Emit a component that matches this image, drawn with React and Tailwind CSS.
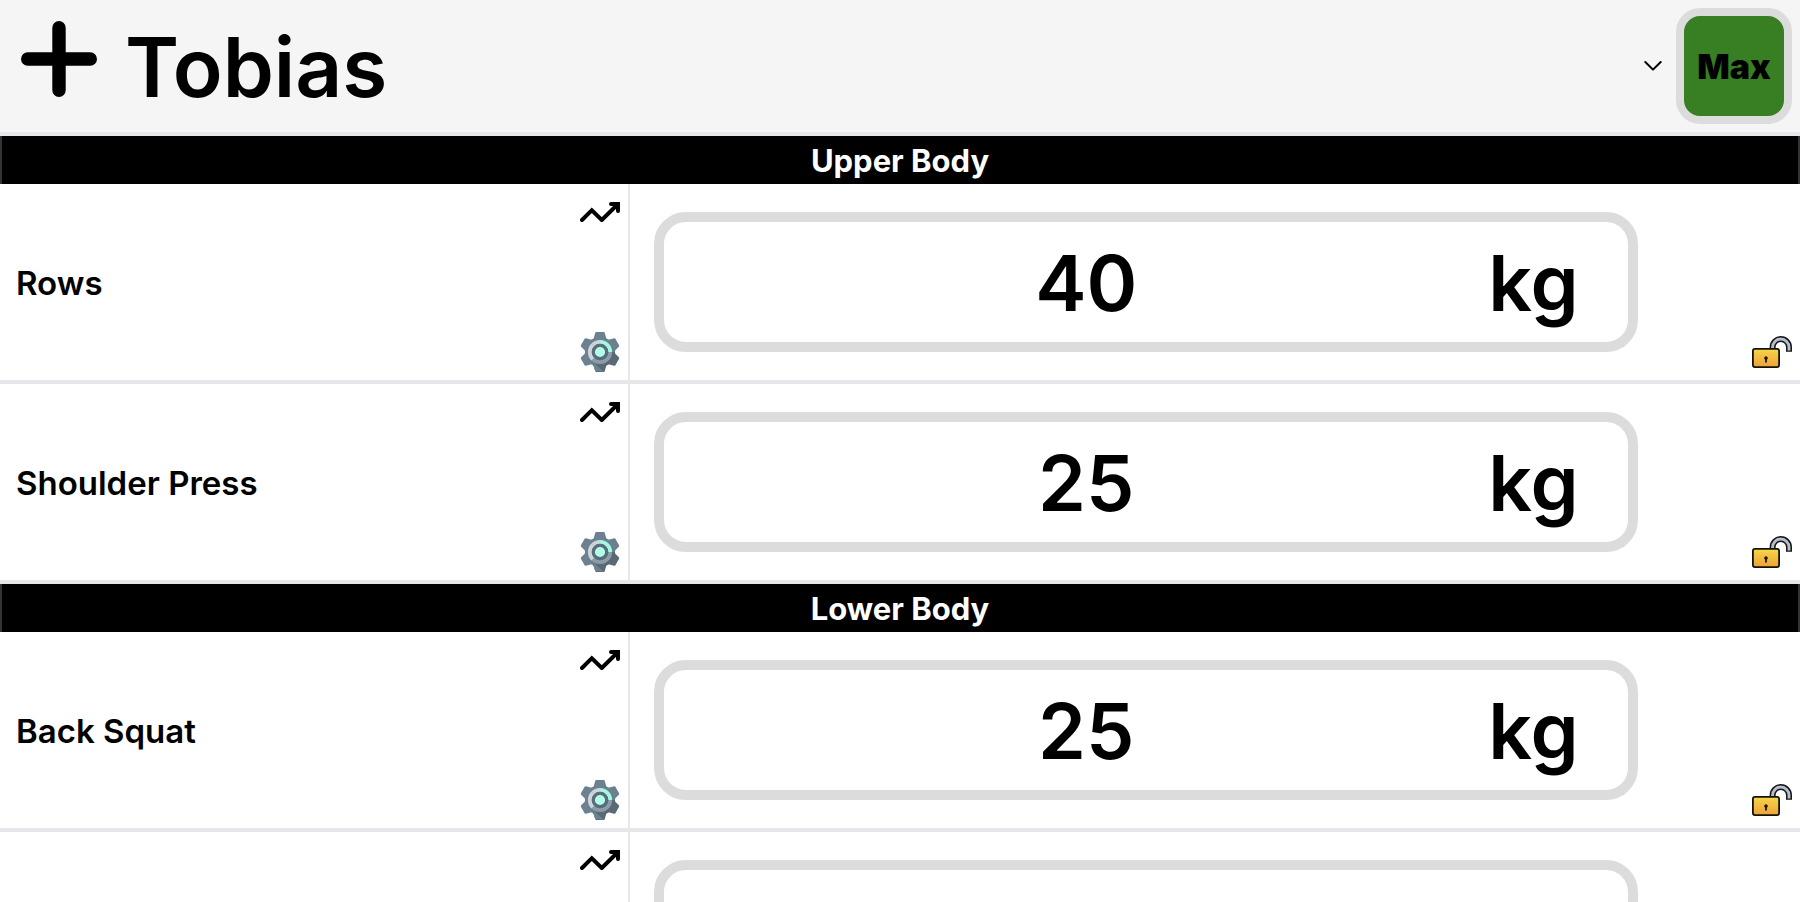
import React, { useState } from "react";

const SECTIONS = [
  {
    title: "Upper Body",
    exercises: [
      { name: "Rows", weight: "40" },
      { name: "Shoulder Press", weight: "25" },
    ],
  },
  {
    title: "Lower Body",
    exercises: [
      { name: "Back Squat", weight: "25" },
      { name: "Deadlift", weight: "40" },
    ],
  },
];

function PlusIcon() {
  return (
    <svg className="size-[76px]" viewBox="0 0 76 76" fill="none" stroke="currentColor" strokeWidth="13.4" strokeLinecap="round" aria-hidden="true">
      <path d="M38 6.7v62.6M6.7 38h62.6" />
    </svg>
  );
}

function ChevronIcon() {
  return (
    <svg className="pointer-events-none h-3 w-[18px] shrink-0" viewBox="0 0 18 12" fill="none" stroke="currentColor" strokeWidth="2" strokeLinecap="round" strokeLinejoin="round" aria-hidden="true">
      <path d="M1.3 2 9 9.6 16.7 2" />
    </svg>
  );
}

function TrendIcon() {
  return (
    <svg className="h-5 w-10" viewBox="0 0 40 20" fill="none" stroke="currentColor" strokeWidth="4" strokeLinecap="round" aria-hidden="true">
      <path d="M2 18 11.8 8.2 21.8 18 37 3" />
      <path d="M31 2h7v7" />
      <path d="M31 0h9v9z" fill="currentColor" stroke="none" />
    </svg>
  );
}

const TOOTH = "M15.2 1q.2-.9 1.1-.9h7.4q.9 0 1.1.9l1.8 6.5H13.4z";

function GearTooth({ angle, fill }) {
  return <path d={TOOTH} fill={fill} transform={`rotate(${angle} 20 20)`} />;
}

function GearIcon() {
  return (
    <svg className="size-10" viewBox="0 0 40 40" aria-hidden="true">
      <circle cx="20" cy="20" r="15" fill="#6c818f" />
      <GearTooth angle={0} fill="#6c818f" />
      <GearTooth angle={60} fill="#6c818f" />
      <GearTooth angle={-60} fill="#6c818f" />
      <GearTooth angle={-120} fill="#6c818f" />
      <GearTooth angle={120} fill="#596a74" />
      <GearTooth angle={180} fill="#596a74" />
      <path d="M35 20A15 15 0 0 1 12.5 33L20 20z" fill="#596a74" />
      <path d="M12 29 13.2 33.5 15.4 39 23.5 39.6z" fill="#6c818f" />
      <circle cx="20" cy="20" r="10.2" fill="none" stroke="#8d9ba7" strokeWidth="3.8" />
      <path d="M12.8 12.8A10.2 10.2 0 0 0 12.8 27.2" fill="none" stroke="#ced4da" strokeWidth="3.8" />
      <path d="M20 9.8A10.2 10.2 0 0 0 12.8 12.8" fill="none" stroke="#ced4da" strokeWidth="3.8" />
      <path d="M20 9.8A10.2 10.2 0 0 1 30.2 20" fill="none" stroke="#a5f7e2" strokeWidth="3.8" />
      <circle cx="20" cy="20" r="6.7" fill="#b5fbe9" stroke="#566e79" strokeWidth="3.2" />
    </svg>
  );
}

function UnlockIcon() {
  return (
    <svg className="h-8 w-10" viewBox="0 0 40 32" aria-hidden="true">
      <defs>
        <linearGradient id="lock-body" x1="0" y1="0" x2="0" y2="1">
          <stop offset="0" stopColor="#f8dc48" />
          <stop offset="0.25" stopColor="#f4c843" />
          <stop offset="1" stopColor="#eda238" />
        </linearGradient>
      </defs>
      <path d="M20.6 15V11.2a8.2 8.2 0 0 1 16.4 0V15.8" fill="none" stroke="#14171c" strokeWidth="6" />
      <path d="M20.6 15V11.2a8.2 8.2 0 0 1 16.4 0V14.4" fill="none" stroke="#b9bfc9" strokeWidth="2.9" />
      <rect x="0.9" y="12.9" width="26.2" height="18.2" rx="2" fill="url(#lock-body)" stroke="#14130d" strokeWidth="1.8" />
      <path d="M14 20.2a1.9 1.9 0 0 1 .9 3.5v2.7h-1.800v-2.700A1.900 1.900 0 0 1 14 20.200z" fill="#1a1508" />
    </svg>
  );
}

function ExerciseRow({ name, initialWeight }) {
  const [weight, setWeight] = useState(initialWeight);
  return (
    <tr>
      <th scope="row" className="h-[200px] border-r-2 border-b-4 border-[#e5e7eb] p-0 text-left align-middle">
        <div className="flex h-[196px] items-center justify-between pr-2 pl-4">
          <span className="pt-0.5 text-[33px] leading-10 font-semibold">{name}</span>
          <div className="flex h-full flex-col items-end justify-between pt-[18px] pb-2">
            <button type="button" aria-label={`${name} history`}>
              <TrendIcon />
            </button>
            <button type="button" aria-label={`${name} settings`}>
              <GearIcon />
            </button>
          </div>
        </div>
      </th>
      <td className="border-b-4 border-[#e5e7eb] p-0">
        <div className="flex h-[196px] justify-between pr-2 pl-6">
          <div className="mt-7 flex h-[140px] w-[86.5%] rounded-[32px] border-[10px] border-[#dcdcdc] pr-10">
            <input
              type="text"
              inputMode="decimal"
              aria-label={`${name} weight`}
              value={weight}
              onChange={(e) => setWeight(e.target.value)}
              className="min-w-0 flex-1 pt-1 pl-6 text-center text-[77px] font-semibold outline-none"
            />
            <select aria-label={`${name} unit`} className="w-[104px] appearance-none pt-1 pl-1 text-[77px] font-semibold outline-none">
              <option>kg</option>
              <option>lb</option>
            </select>
          </div>
          <button type="button" aria-label={`Lock ${name}`} className="self-end pb-3">
            <UnlockIcon />
          </button>
        </div>
      </td>
    </tr>
  );
}

export default function App() {
  return (
    <div className="flex h-screen flex-col bg-white font-['Inter',sans-serif] text-black">
      <header className="flex shrink-0 items-center border-b-4 border-[#e5e7eb] bg-[#f5f5f5] py-2 pr-2 pl-[21px]">
        <button type="button" aria-label="Add exercise" className="self-start pt-[13px]">
          <PlusIcon />
        </button>
        <div className="ml-7 flex min-w-0 flex-1 items-center">
          <select aria-label="Athlete" className="h-[116px] w-full appearance-none pt-1 text-[82px] leading-[112px] font-semibold outline-none">
            <option>Tobias</option>
          </select>
          <ChevronIcon />
        </div>
        <button type="button" className="ml-[14px] flex size-[116px] shrink-0 items-center justify-center rounded-3xl border-8 border-[#dcdcdc] bg-[#387e22] text-[34px] font-black">
          Max
        </button>
      </header>
      <main className="min-h-0 flex-1 overflow-y-auto [scrollbar-width:none]">
        <table className="w-full table-fixed border-separate border-spacing-0">
          <colgroup>
            <col className="w-[35%]" />
            <col />
          </colgroup>
          {SECTIONS.map((section) => (
            <tbody key={section.title}>
              <tr>
                <th colSpan={2} scope="colgroup" className="h-12 border-x-2 border-[#333333] bg-black p-0 pt-0.5 text-center text-[31px] leading-[46px] font-bold text-white">
                  {section.title}
                </th>
              </tr>
              {section.exercises.map((exercise) => (
                <ExerciseRow key={exercise.name} name={exercise.name} initialWeight={exercise.weight} />
              ))}
            </tbody>
          ))}
        </table>
      </main>
    </div>
  );
}
